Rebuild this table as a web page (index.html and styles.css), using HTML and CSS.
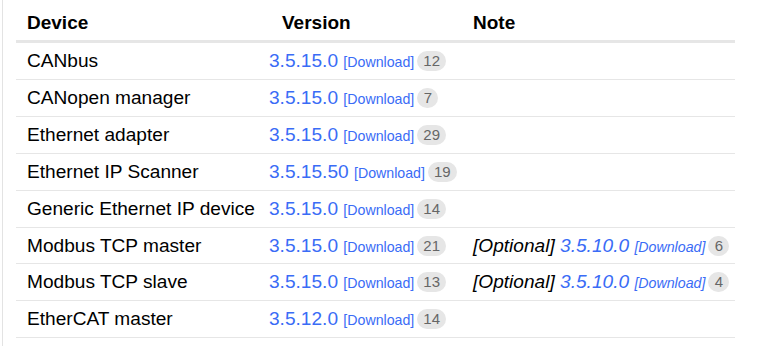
FILE: index.html
```html
<!DOCTYPE html>
<html>
<head>
<meta charset="utf-8">
<link rel="stylesheet" href="styles.css">
</head>
<body>
<div class="page">
  <table class="devices">
    <colgroup>
      <col class="c-device">
      <col class="c-version">
      <col class="c-note">
    </colgroup>
    <thead>
      <tr>
        <th class="h-device">Device</th>
        <th class="h-version">Version</th>
        <th class="h-note">Note</th>
      </tr>
    </thead>
    <tbody>
      <tr>
        <td class="dev">CANbus</td>
        <td><a class="ver">3.5.15.0</a> <a class="dl">[Download]</a><span class="badge">12</span></td>
        <td></td>
      </tr>
      <tr>
        <td class="dev">CANopen manager</td>
        <td><a class="ver">3.5.15.0</a> <a class="dl">[Download]</a><span class="badge">7</span></td>
        <td></td>
      </tr>
      <tr>
        <td class="dev">Ethernet adapter</td>
        <td><a class="ver">3.5.15.0</a> <a class="dl">[Download]</a><span class="badge">29</span></td>
        <td></td>
      </tr>
      <tr>
        <td class="dev">Ethernet IP Scanner</td>
        <td><a class="ver">3.5.15.50</a> <a class="dl">[Download]</a><span class="badge">19</span></td>
        <td></td>
      </tr>
      <tr>
        <td class="dev">Generic Ethernet IP device</td>
        <td><a class="ver">3.5.15.0</a> <a class="dl">[Download]</a><span class="badge">14</span></td>
        <td></td>
      </tr>
      <tr>
        <td class="dev">Modbus TCP master</td>
        <td><a class="ver">3.5.15.0</a> <a class="dl">[Download]</a><span class="badge">21</span></td>
        <td class="note"><span class="opt">[Optional]</span> <a class="ver">3.5.10.0</a> <a class="dl">[Download]</a><span class="badge">6</span></td>
      </tr>
      <tr>
        <td class="dev">Modbus TCP slave</td>
        <td><a class="ver">3.5.15.0</a> <a class="dl">[Download]</a><span class="badge">13</span></td>
        <td class="note"><span class="opt">[Optional]</span> <a class="ver">3.5.10.0</a> <a class="dl">[Download]</a><span class="badge">4</span></td>
      </tr>
      <tr>
        <td class="dev">EtherCAT master</td>
        <td><a class="ver">3.5.12.0</a> <a class="dl">[Download]</a><span class="badge">14</span></td>
        <td></td>
      </tr>
    </tbody>
  </table>
</div>
</body>
</html>
```

FILE: styles.css
```css
html, body {
  margin: 0;
  padding: 0;
  background: #ffffff;
}

body {
  font-family: "Liberation Sans", Arial, sans-serif;
  color: #000000;
}

.page {
  margin-left: 2px;
  border-left: 1px solid #e3e3e3;
  min-height: 346px;
  padding-left: 13px;
}

.devices {
  border-collapse: collapse;
  table-layout: fixed;
  width: 719px;
}

.c-device { width: 246px; }
.c-version { width: 204px; }
.c-note { width: 269px; }

.devices th {
  text-align: left;
  font-weight: bold;
  font-size: 19px;
  line-height: 27px;
  padding: 9px 7px 4px 7px;
  border-bottom: 3px solid #e6e6e6;
  white-space: nowrap;
}

.devices th.h-device { padding-left: 11px; }
.devices th.h-version { padding-left: 20px; }

.devices td {
  font-size: 19.1px;
  line-height: 27.9px;
  padding: 4px 7px;
  border-bottom: 1px solid #e6e6e6;
  white-space: nowrap;
  vertical-align: middle;
}

.devices td.dev { padding-left: 11px; }

.ver {
  color: #3a6cf6;
  text-decoration: none;
}

.dl {
  color: #3a6cf6;
  font-size: 14.2px;
  line-height: 1;
  text-decoration: none;
}

.note .opt,
.note .ver,
.note .dl {
  font-style: italic;
}

.badge {
  display: inline-block;
  margin-left: 3px;
  padding: 0 6px;
  min-width: 9px;
  height: 20px;
  line-height: 20px;
  border-radius: 10px;
  background: #e6e6e6;
  color: #666666;
  font-size: 15px;
  text-align: center;
  vertical-align: 1px;
}
```
